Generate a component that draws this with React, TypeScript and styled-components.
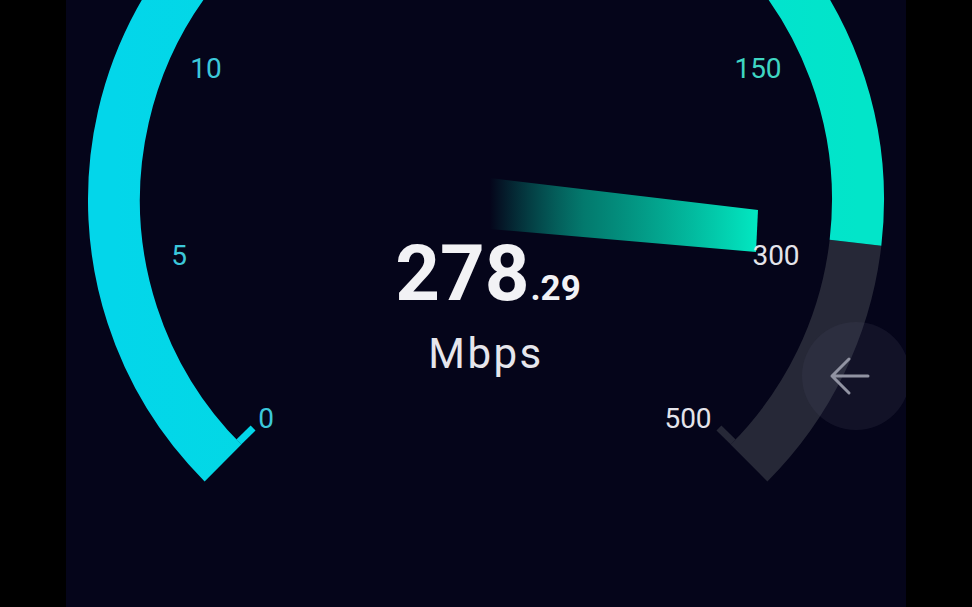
import * as React from "react";
import styled, { createGlobalStyle } from "styled-components";

const GlobalStyle = createGlobalStyle`
  html, body {
    margin: 0;
    padding: 0;
    background: #000000;
    overflow: hidden;
  }
  #root {
    width: 972px;
    height: 607px;
  }
`;

// gauge geometry, page coordinates
const CX = 486;
const CY = 200;
const R = 372;
const START = 225; // value 0
const END = -45; // value 500
const NOW = -6.6; // ~278

function xy(deg: number, r: number): [number, number] {
  const a = (deg * Math.PI) / 180;
  return [CX + r * Math.cos(a), CY - r * Math.sin(a)];
}

function pt(deg: number, r: number): string {
  const [x, y] = xy(deg, r);
  return `${x.toFixed(1)} ${y.toFixed(1)}`;
}

function arc(from: number, to: number, r: number): string {
  const large = from - to > 180 ? 1 : 0;
  return `M ${pt(from, r)} A ${r} ${r} 0 ${large} 1 ${pt(to, r)}`;
}

const ScScreen = styled.div`
  display: flex;
  width: 972px;
  height: 607px;
  background: #000000;
  font-family: Roboto, "Liberation Sans", sans-serif;
`;

const ScBlackBar = styled.div`
  width: 66px;
  flex-shrink: 0;
  background: #000000;
`;

const ScPanel = styled.main`
  position: relative;
  flex: 1;
  background: #05051a;
  overflow: hidden;
`;

const ScGauge = styled.svg`
  display: block;
  width: 840px;
  height: 607px;
`;

const ScTick = styled.text<{ $active: "cyan" | "teal" | "off" }>`
  font-family: Roboto, "Liberation Sans", sans-serif;
  font-size: 28px;
  fill: ${(p) =>
    p.$active === "cyan" ? "#3cc8da" : p.$active === "teal" ? "#3fd6c2" : "#e4e4ea"};
`;

const ScReadout = styled.div`
  position: absolute;
  left: 0;
  right: 0;
  top: 235px;
  display: flex;
  flex-direction: column;
  align-items: center;
  gap: 20px;
  color: #f2f2f5;
`;

const ScValue = styled.div`
  display: flex;
  align-items: baseline;
  line-height: 1;
  padding-left: 4px;
`;

const ScInt = styled.span`
  font-size: 78px;
  font-weight: 700;
`;

const ScDec = styled.span`
  font-size: 35px;
  font-weight: 700;
  margin-left: 1px;
`;

const ScUnit = styled.div`
  font-size: 42px;
  line-height: 1;
  letter-spacing: 2.5px;
  color: #e6e6ec;
`;

const ScBackButton = styled.button`
  position: absolute;
  left: 736px;
  top: 322px;
  width: 108px;
  height: 108px;
  border: none;
  border-radius: 50%;
  padding: 0 12px 0 0;
  background: rgba(70, 72, 96, 0.2);
  display: flex;
  align-items: center;
  justify-content: center;
`;

function Stub({ deg, color }: { deg: number; color: string }): JSX.Element {
  const [x1, y1] = xy(deg, R - 26);
  const [x2, y2] = xy(deg, R - 46);
  return <line x1={x1} y1={y1} x2={x2} y2={y2} stroke={color} strokeWidth={7} />;
}

export default function App(): JSX.Element {
  const ticks: { label: string; x: number; y: number; c: "cyan" | "teal" | "off" }[] = [
    { label: "0", x: 266, y: 428, c: "cyan" },
    { label: "5", x: 179, y: 265, c: "cyan" },
    { label: "10", x: 206, y: 78, c: "cyan" },
    { label: "150", x: 758, y: 78, c: "teal" },
    { label: "300", x: 776, y: 265, c: "off" },
    { label: "500", x: 688, y: 428, c: "off" },
  ];

  return (
    <>
      <GlobalStyle />
      <ScScreen>
        <ScBlackBar />
        <ScPanel>
          <ScGauge viewBox="66 0 840 607">
            <defs>
              <linearGradient id="arcFill" gradientUnits="userSpaceOnUse" x1="114" y1="0" x2="858" y2="0">
                <stop offset="0" stopColor="#03d6ea" />
                <stop offset="0.5" stopColor="#02dcdc" />
                <stop offset="1" stopColor="#02e5c9" />
              </linearGradient>
              <linearGradient id="needle" gradientUnits="userSpaceOnUse" x1="490" y1="0" x2="758" y2="0">
                <stop offset="0" stopColor="#02e6c0" stopOpacity="0" />
                <stop offset="0.35" stopColor="#02b89a" stopOpacity="0.65" />
                <stop offset="1" stopColor="#02e8c2" />
              </linearGradient>
            </defs>

            {/* remaining range */}
            <path d={arc(NOW, END, R)} fill="none" stroke="#262837" strokeWidth={52} />
            <Stub deg={END + 0.6} color="#262837" />

            {/* measured range */}
            <path d={arc(START, NOW, R)} fill="none" stroke="url(#arcFill)" strokeWidth={52} />
            <Stub deg={START - 0.6} color="#03d6ea" />

            {/* needle */}
            <polygon points="490,178 758,210 756,252 490,229" fill="url(#needle)" />

            {ticks.map((t) => (
              <ScTick key={t.label} x={t.x} y={t.y} textAnchor="middle" $active={t.c}>
                {t.label}
              </ScTick>
            ))}
          </ScGauge>

          <ScReadout>
            <ScValue>
              <ScInt>278</ScInt>
              <ScDec>.29</ScDec>
            </ScValue>
            <ScUnit>Mbps</ScUnit>
          </ScReadout>

          <ScBackButton aria-label="back">
            <svg width="42" height="40" viewBox="0 0 42 40">
              <path
                d="M39 20 H3 M20 3 L3 20 L20 37"
                fill="none"
                stroke="#9193a2"
                strokeWidth={3}
                strokeLinecap="round"
                strokeLinejoin="round"
              />
            </svg>
          </ScBackButton>
        </ScPanel>
        <ScBlackBar />
      </ScScreen>
    </>
  );
}
